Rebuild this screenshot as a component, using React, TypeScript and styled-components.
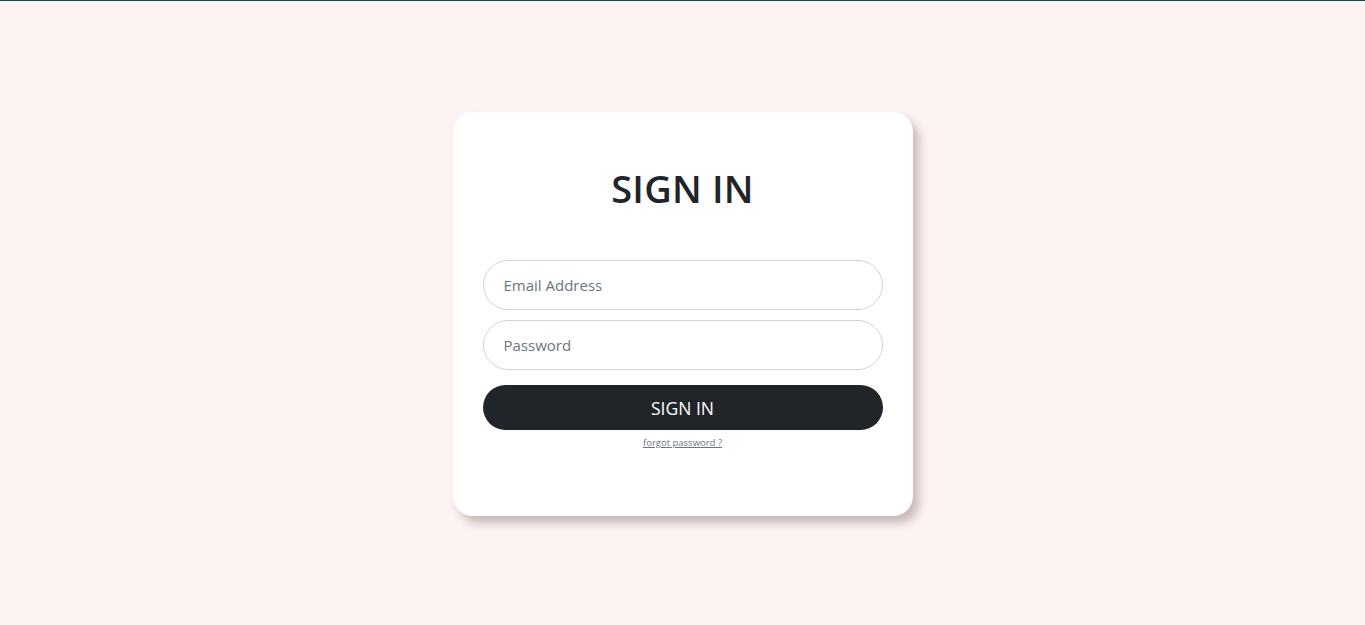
import React from "react";
import styled, { createGlobalStyle } from "styled-components";

const Global = createGlobalStyle`
  html, body { margin: 0; padding: 0; }
  body {
    background: #fdf3f2;
    font-family: "Open Sans", "Noto Sans", "Liberation Sans", sans-serif;
  }
  * { box-sizing: border-box; }
`;

const Page = styled.div`
  min-height: 625px;
  border-top: 1px solid #0c4a4e;
  display: flex;
  justify-content: center;
  padding-top: 111px;
`;

const Card = styled.form`
  width: 460px;
  height: 404px;
  background: #ffffff;
  border-radius: 20px;
  box-shadow: 6px 7px 10px rgba(120, 100, 100, 0.4);
  padding: 52px 30px 0;
  display: flex;
  flex-direction: column;
`;

const Title = styled.h1`
  margin: 0 0 48px;
  text-align: center;
  font-size: 38px;
  line-height: 48px;
  font-weight: 600;
  color: #212529;
  letter-spacing: 0.2px;
`;

const Field = styled.input`
  width: 400px;
  height: 50px;
  border: 1px solid #ced4da;
  border-radius: 25px;
  padding: 0 20px;
  font-family: inherit;
  font-size: 15px;
  color: #212529;
  background: #fff;
  outline: none;
  margin-bottom: 10px;
  &::placeholder { color: #6c757d; }
`;

const Button = styled.button`
  margin-top: 5px;
  width: 400px;
  height: 45px;
  border: none;
  border-radius: 23px;
  background: #212529;
  color: #fff;
  font-family: inherit;
  font-size: 17.5px;
`;

const Forgot = styled.a`
  margin-top: 6px;
  align-self: center;
  font-size: 9.5px;
  color: #6c757d;
  text-decoration: underline;
`;

export default function App() {
  return (
    <>
      <Global />
      <Page>
        <Card onSubmit={(e) => e.preventDefault()}>
          <Title>SIGN IN</Title>
          <Field type="email" placeholder="Email Address" />
          <Field type="password" placeholder="Password" />
          <Button type="submit">SIGN IN</Button>
          <Forgot href="#">forgot password ?</Forgot>
        </Card>
      </Page>
    </>
  );
}
